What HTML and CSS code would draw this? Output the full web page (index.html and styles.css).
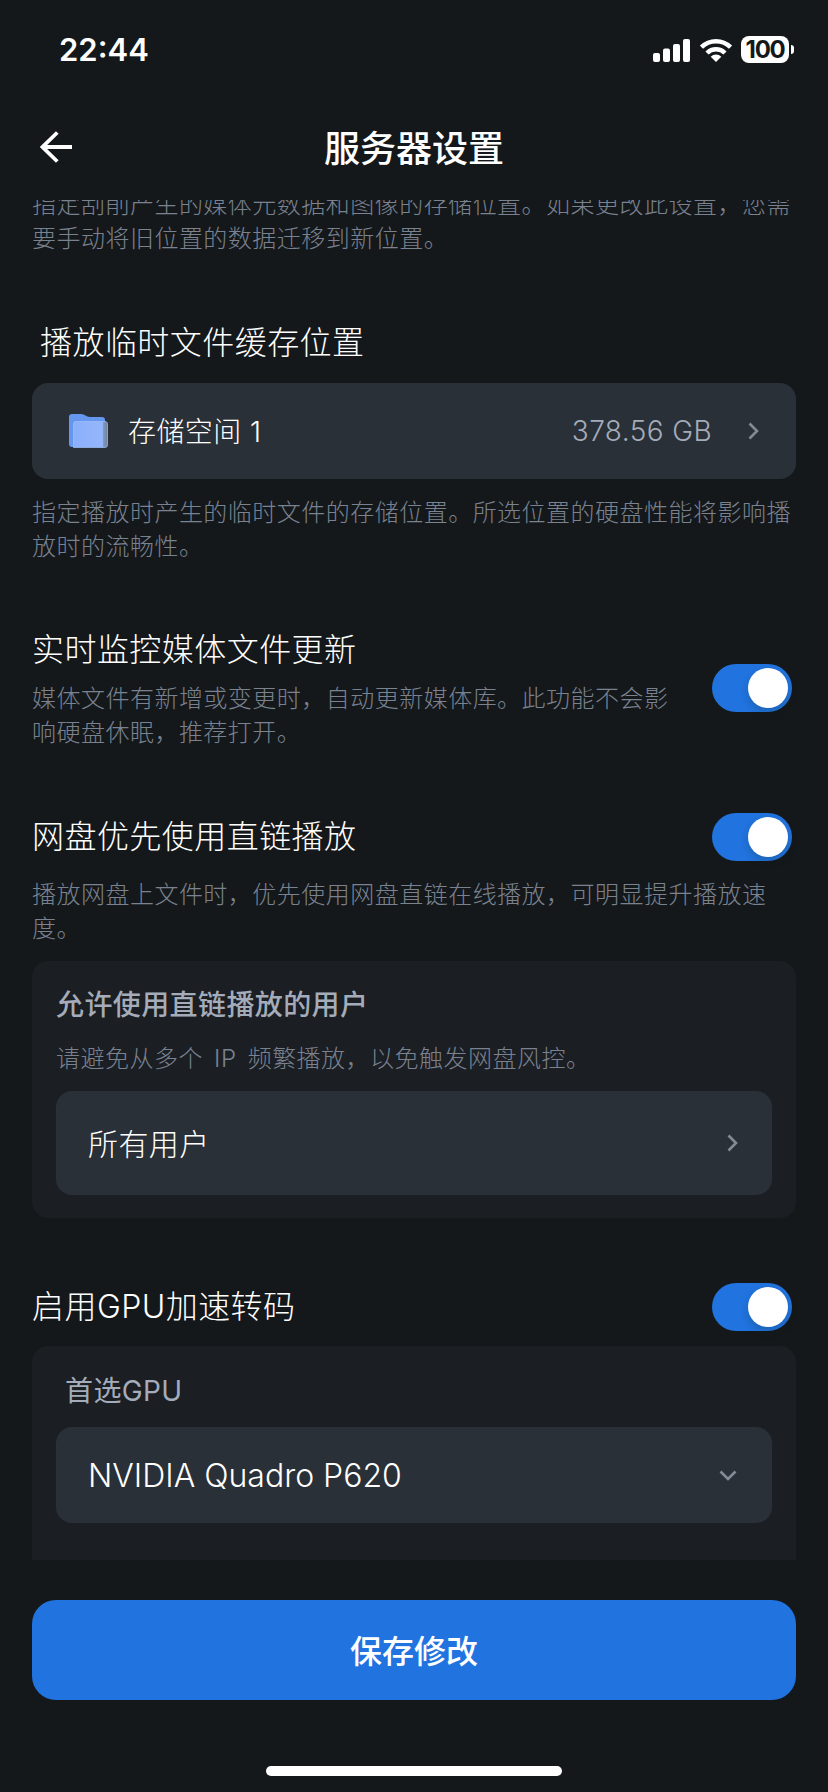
FILE: index.html
```html
<!DOCTYPE html>
<html lang="zh-CN">
<head>
    <meta charset="UTF-8">
    <meta name="viewport" content="width=device-width, initial-scale=1.0">
    <title>服务器设置</title>
    <link rel="stylesheet" href="styles.css">
</head>
<body>
    <!-- Status bar -->
    <div class="status-bar">
        <span class="clock">22:44</span>
        <div class="status-icons">
            <svg class="signal" width="38" height="24" viewBox="0 0 38 24" fill="#fff">
                <rect x="0" y="15" width="7" height="9" rx="2"/>
                <rect x="10" y="10.500" width="7" height="13.500" rx="2"/>
                <rect x="20" y="6" width="7" height="18" rx="2"/>
                <rect x="30" y="1" width="7" height="23" rx="2"/>
            </svg>
            <svg class="wifi" width="32" height="24" viewBox="0 0 32 24" fill="none" stroke="#fff" stroke-width="4.400">
                <path d="M1.500 9.200a20.500 20.500 0 0 1 29 0"/>
                <path d="M7 15a12.700 12.700 0 0 1 18 0"/>
                <path d="M16 24l-5.300-5.300a7.500 7.500 0 0 1 10.600 0z" fill="#fff" stroke="none"/>
            </svg>
            <div class="battery">
                <span class="battery-body">100</span>
                <span class="battery-tip"></span>
            </div>
        </div>
    </div>

    <!-- Header -->
    <header class="header">
        <svg class="back" width="32" height="32" viewBox="0 0 32 32" fill="none" stroke="#fff" stroke-width="3.800">
            <path d="M17.300 1.500L2.500 16l14.800 14.500M2.500 16H32"/>
        </svg>
        <h1>服务器设置</h1>
    </header>

    <!-- Settings -->
    <main class="settings">
        <p class="desc desc-first">指定刮削产生的媒体元数据和图像的存储位置。如果更改此设置，您需<br>要手动将旧位置的数据迁移到新位置。</p>

        <section class="cache">
            <h2>播放临时文件缓存位置</h2>
            <div class="select">
                <svg class="folder" width="40" height="34" viewBox="0 0 40 34">
                    <defs>
                        <linearGradient id="front" x1="0" y1="0" x2="1" y2="0">
                            <stop offset="0" stop-color="#8bb0fb"/>
                            <stop offset="0.850" stop-color="#94b6fc"/>
                            <stop offset="0.880" stop-color="#8298bd"/>
                            <stop offset="1" stop-color="#6f809c"/>
                        </linearGradient>
                    </defs>
                    <path d="M0 3a3 3 0 0 1 3-3h9c4 0 5 3 9 3h12a3 3 0 0 1 3 3v27H3a3 3 0 0 1-3-3z" fill="#6597ee"/>
                    <path d="M4.500 33.500V10a2.500 2.500 0 0 1 2.500-2.500h29a2.500 2.500 0 0 1 2.500 2.500v21a2.500 2.500 0 0 1-2.500 2.500z" fill="url(#front)" stroke="#a3c0fa" stroke-opacity="0.700"/>
                </svg>
                <span class="storage-name">存储空间 1</span>
                <span class="storage-size">378.56 GB</span>
                <svg class="chevron" width="11" height="18" viewBox="0 0 11 18"><path d="M1.500 1.500L9 9l-7.500 7.500"/></svg>
            </div>
            <p class="desc">指定播放时产生的临时文件的存储位置。所选位置的硬盘性能将影响播<br>放时的流畅性。</p>
        </section>

        <section class="row monitor">
            <div>
                <h2>实时监控媒体文件更新</h2>
                <p class="desc">媒体文件有新增或变更时，自动更新媒体库。此功能不会影<br>响硬盘休眠，推荐打开。</p>
            </div>
            <div class="switch"></div>
        </section>

        <section class="direct">
            <div class="row">
                <h2>网盘优先使用直链播放</h2>
                <div class="switch"></div>
            </div>
            <p class="desc">播放网盘上文件时，优先使用网盘直链在线播放，可明显提升播放速<br>度。</p>
            <div class="panel users">
                <h3>允许使用直链播放的用户</h3>
                <p class="desc">请避免从多个 IP 频繁播放，以免触发网盘风控。</p>
                <div class="select">
                    <span class="user-value">所有用户</span>
                    <svg class="chevron" width="11" height="18" viewBox="0 0 11 18"><path d="M1.500 1.500L9 9l-7.500 7.500"/></svg>
                </div>
            </div>
        </section>

        <section class="gpu">
            <div class="row">
                <h2>启用GPU加速转码</h2>
                <div class="switch"></div>
            </div>
            <div class="panel">
                <h3>首选GPU</h3>
                <div class="select">
                    <span class="gpu-value">NVIDIA Quadro P620</span>
                    <svg class="chevron" width="18" height="11" viewBox="0 0 18 11"><path d="M1.500 1.500L9 9l7.500-7.500"/></svg>
                </div>
            </div>
        </section>
    </main>

    <!-- Footer -->
    <footer class="footer">
        <button class="save">保存修改</button>
        <div class="home-indicator"></div>
    </footer>
</body>
</html>
```
FILE: styles.css
```css
* {
    box-sizing: border-box;
}

body {
    margin: 0;
    width: 828px;
    height: 1792px;
    display: flex;
    flex-direction: column;
    overflow: hidden;
    background-color: #14181b;
    color: #fff;
    font-family: Inter, "Noto Sans CJK SC", sans-serif;
}

h1, h2, h3, p {
    margin: 0;
}

svg {
    display: block;
    flex: none;
}

/* Status bar */
.status-bar {
    height: 100px;
    display: flex;
    justify-content: space-between;
    align-items: center;
    padding: 0 34px 1px 59px;
}

.clock {
    font-size: 31px;
    font-weight: 600;
}

.status-icons {
    display: flex;
    align-items: center;
}

.signal {
    margin-right: 9px;
}

.wifi {
    margin-right: 9px;
}

.battery {
    display: flex;
    align-items: center;
    gap: 2px;
}

.battery-body {
    width: 48px;
    height: 27px;
    border-radius: 8px;
    background-color: #fff;
    color: #14181b;
    font-size: 24px;
    font-weight: 700;
    line-height: 27px;
    letter-spacing: -1.3px;
    text-align: center;
}

.battery-tip {
    width: 3px;
    height: 9px;
    border-radius: 0 4px 4px 0;
    background-color: #fff;
}

/* Header */
.header {
    height: 100px;
    display: grid;
    grid-template-columns: 80px 1fr 80px;
    align-items: center;
    padding-bottom: 6px;
}

.back {
    margin-left: 40px;
}

h1 {
    padding-top: 4px;
    font-size: 36px;
    font-weight: 500;
    line-height: 50px;
    text-align: center;
}

/* Settings */
.settings {
    height: 1360px;
    overflow: hidden;
    padding: 0 32px;
}

h2 {
    font-size: 32px;
    font-weight: 300;
    line-height: 48px;
    letter-spacing: 0.45px;
    white-space: nowrap;
}

h3 {
    font-size: 28px;
    font-weight: 500;
    line-height: 40px;
    letter-spacing: 0.4px;
    color: #a4acba;
}

.desc {
    font-size: 24px;
    font-weight: 300;
    line-height: 34px;
    letter-spacing: 0.48px;
    color: #7a8290;
    white-space: nowrap;
}

.desc-first {
    margin-top: -12px;
}

.row {
    display: flex;
    justify-content: space-between;
    align-items: center;
    padding-right: 4px;
}

.select {
    height: 96px;
    display: flex;
    align-items: center;
    border-radius: 16px;
    background-color: #2a3037;
    font-weight: 300;
}

.chevron {
    fill: none;
    stroke: #858b96;
    stroke-width: 2.6;
}

.panel {
    border-radius: 16px;
    background-color: #1b1e23;
    padding: 0 24px;
}

.switch {
    flex: none;
    width: 80px;
    height: 48px;
    padding: 4px;
    border-radius: 24px;
    background-color: #2173df;
}

.switch::after {
    content: "";
    display: block;
    width: 40px;
    height: 40px;
    margin-left: auto;
    border-radius: 50%;
    background-color: #fff;
    box-shadow: 0 4px 8px rgba(0, 35, 11, 0.2);
}

/* Cache location */
.cache {
    margin-top: 63px;
}

.cache h2 {
    padding-left: 8px;
}

.cache .select {
    margin: 16px 0 17px;
    padding: 0 37px;
}

.storage-name {
    flex: 1;
    margin-left: 19px;
    padding-bottom: 2px;
    font-size: 28px;
    letter-spacing: 0.4px;
}

.storage-size {
    margin-right: 36px;
    font-size: 28px;
    letter-spacing: 0.4px;
    color: #a4acba;
}

/* File monitor */
.monitor {
    margin-top: 62px;
}

.monitor .desc {
    margin-top: 8px;
}

/* Direct link playback */
.direct {
    margin-top: 63px;
}

.direct > .desc {
    margin: 17px 0 15px;
}

.users {
    height: 257px;
    padding-top: 24px;
}

.users .desc {
    margin: 17px 0 15px;
    word-spacing: 4px;
}

.users .select {
    height: 104px;
    padding: 0 34px 0 32px;
}

.user-value {
    flex: 1;
    padding-bottom: 2px;
    font-size: 30px;
    letter-spacing: 0.4px;
}

/* GPU transcoding */
.gpu {
    margin-top: 65px;
}

.gpu .panel {
    height: 320px;
    margin-top: 15px;
    padding-top: 25px;
}

.gpu h3 {
    padding-left: 9px;
    font-weight: 400;
}

.gpu .select {
    margin-top: 16px;
    padding: 0 35px 0 32px;
}

.gpu-value {
    flex: 1;
    font-size: 32px;
}

/* Footer */
.footer {
    flex: 1;
    display: flex;
    flex-direction: column;
    align-items: center;
    padding: 40px 32px 0;
}

.save {
    width: 100%;
    height: 100px;
    padding: 0 0 3px;
    border: none;
    border-radius: 24px;
    background-color: #2173df;
    color: #fff;
    font-family: inherit;
    font-size: 32px;
    font-weight: 500;
}

.home-indicator {
    width: 296px;
    height: 10px;
    margin-top: 66px;
    border-radius: 5px;
    background-color: #fff;
}
```
